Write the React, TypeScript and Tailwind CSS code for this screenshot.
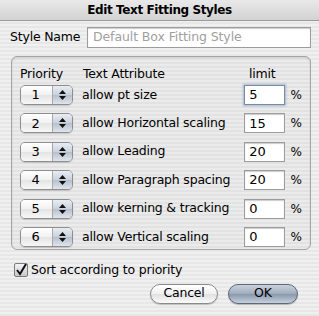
import React from 'react';

const rows = [
  { p: '1', label: 'allow pt size', limit: '5', focus: true },
  { p: '2', label: 'allow Horizontal scaling', limit: '15' },
  { p: '3', label: 'allow Leading', limit: '20' },
  { p: '4', label: 'allow Paragraph spacing', limit: '20' },
  { p: '5', label: 'allow kerning & tracking', limit: '0' },
  { p: '6', label: 'allow Vertical scaling', limit: '0' },
];

function Stepper({ value }: { value: string }) {
  return (
    <div className="flex h-[20px] w-[54px] overflow-hidden rounded-[5px] border border-[#8e8e8e] shadow-[0_1px_1px_rgba(0,0,0,0.15)]">
      <div className="flex flex-1 items-center justify-center bg-[linear-gradient(to_bottom,#ffffff,#f1f1f1_50%,#e4e4e4_51%,#f7f7f7)] pr-[2px] text-[13px] text-black">
        {value}
      </div>
      <div className="flex w-[20px] flex-col items-center justify-center gap-[2px] border-l border-[#a8a8a8] bg-[linear-gradient(to_bottom,#e9edf3,#c9d1dc_50%,#b5bfcc_51%,#dfe5ec)]">
        <svg width="7" height="4" viewBox="0 0 7 4"><path d="M3.5 0 L7 4 L0 4 Z" fill="#111" /></svg>
        <svg width="7" height="4" viewBox="0 0 7 4"><path d="M0 0 L7 0 L3.5 4 Z" fill="#111" /></svg>
      </div>
    </div>
  );
}

export default function App() {
  return (
    <div className="flex h-[316px] w-[319px] flex-col overflow-hidden bg-[repeating-linear-gradient(to_bottom,#f0f0f0_0px,#f0f0f0_2px,#e7e7e7_2px,#e7e7e7_4px)] font-['DejaVu_Sans',sans-serif] text-[12px] text-black">
      <div className="flex h-[21px] items-center justify-center border-b border-[#9a9a9a] bg-[linear-gradient(to_bottom,#e9e9e9,#d3d3d3)] text-[12px] font-bold tracking-[-0.4px]">
        Edit Text Fitting Styles
      </div>

      <div className="mt-[6px] flex items-center pl-[10px]">
        <span className="w-[77px] text-[12.5px] tracking-[-0.2px]">Style Name</span>
        <div className="flex h-[21px] w-[224px] items-center border border-[#9c9c9c] bg-white pl-[5px] text-[12.5px] tracking-[-0.1px] text-[#a0a0a0] shadow-[inset_0_1px_1px_rgba(0,0,0,0.2)]">
          Default Box Fitting Style
        </div>
      </div>

      <div className="ml-[11px] mt-[8px] flex h-[194px] w-[300px] flex-col rounded-[6px] border border-[#a4a4a4] bg-[rgba(0,0,0,0.02)] px-[8px] shadow-[inset_0_1px_2px_rgba(0,0,0,0.12)]">
        <div className="mt-[9px] flex h-[16px] items-center text-[12.5px] tracking-[-0.2px]">
          <span className="w-[63px]">Priority</span>
          <span className="w-[166px]">Text Attribute</span>
          <span>limit</span>
        </div>
        <div className="mt-[3px] flex flex-col gap-[8.4px]">
          {rows.map((r) => (
            <div key={r.p} className="flex h-[20px] items-center">
              <Stepper value={r.p} />
              <span className="ml-[9px] w-[165px] text-[12.5px] tracking-[-0.2px]">{r.label}</span>
              <div
                className={
                  r.focus
                    ? 'flex h-[20px] w-[41px] items-center border border-[#7d8a9c] bg-white pl-[4px] text-[13px] shadow-[0_0_2px_1px_rgba(120,150,200,0.6)]'
                    : 'flex h-[20px] w-[41px] items-center border border-[#9c9c9c] bg-white pl-[4px] text-[13px] shadow-[inset_0_1px_1px_rgba(0,0,0,0.2)]'
                }
              >
                {r.limit}
              </div>
              <span className="ml-[6px] text-[12px]">%</span>
            </div>
          ))}
        </div>
      </div>

      <div className="ml-[14px] mt-[11px] flex items-center">
        <div className="flex h-[14px] w-[14px] items-center justify-center rounded-[2px] border border-[#7a7a7a] bg-[linear-gradient(to_bottom,#f4f4f4,#c8c8c8)]">
          <svg width="12" height="12" viewBox="0 0 12 12">
            <path d="M2 6 L5 10 L11 0" fill="none" stroke="#111" strokeWidth="2" />
          </svg>
        </div>
        <span className="ml-[3px] text-[12.5px] tracking-[-0.2px]">Sort according to priority</span>
      </div>

      <div className="mt-[4px] flex justify-end gap-[10px] pr-[21px]">
        <div className="flex h-[20px] w-[68px] items-center justify-center rounded-full border border-[#8a8a8a] bg-[linear-gradient(to_bottom,#ffffff,#f0f0f0_50%,#e0e0e0_51%,#fbfbfb)] text-[12.5px] tracking-[-0.2px] shadow-[0_1px_1px_rgba(0,0,0,0.2)]">
          Cancel
        </div>
        <div className="flex h-[20px] w-[70px] items-center justify-center rounded-full border border-[#5d6878] bg-[linear-gradient(to_bottom,#c9d1dc,#9fabbc_50%,#8897ab_51%,#c7d1de)] text-[12.5px] shadow-[0_1px_1px_rgba(0,0,0,0.25)]">
          OK
        </div>
      </div>
    </div>
  );
}
